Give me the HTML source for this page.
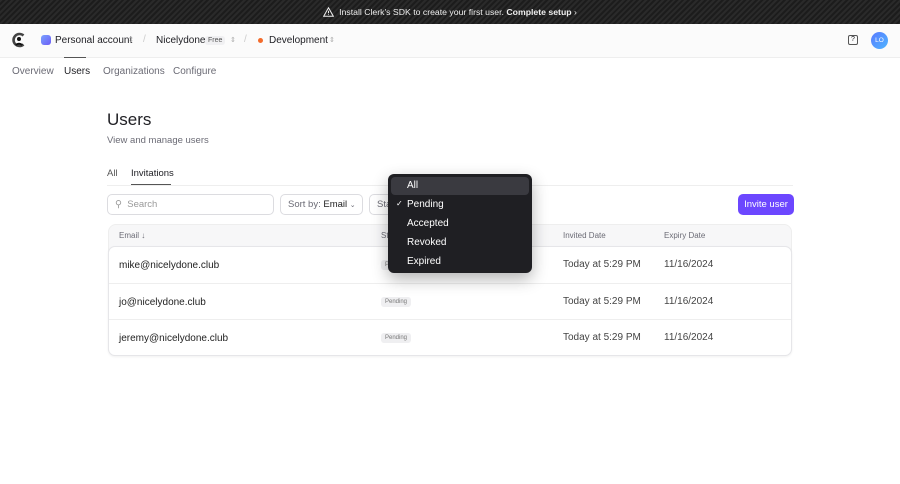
<!DOCTYPE html>
<html><head><meta charset="utf-8"><style>
*{box-sizing:border-box;margin:0;padding:0}
body{width:900px;height:484px;overflow:hidden;background:#fff;font-family:"Liberation Sans",sans-serif;color:#212126;position:relative;font-size:10px}
.a{position:absolute;white-space:nowrap}
.banner{left:0;top:0;width:900px;height:24px;background:repeating-linear-gradient(135deg,#2a2a2a 0 2px,#1c1c1c 2px 4px);color:#eee;font-size:8.7px;display:flex;align-items:center;justify-content:center;gap:5px}
.hdr{left:0;top:24px;width:900px;height:34px;background:#fbfbfb;border-bottom:1px solid #eee}
.muted{color:#6b6b75}
.btn{border:1px solid #dcdce0;border-radius:5px;background:#fff;height:21px}
.row{position:absolute;left:0;width:682px;height:36px;border-top:1px solid #eee;font-size:10px}
.row .e{position:absolute;left:10px;top:13px;color:#222}
.row .p{position:absolute;left:272px;top:13px;background:#efeff1;color:#777;font-size:6px;padding:2px 4px;border-radius:3px}
.row .i{position:absolute;left:454px;top:12px;color:#444}
.row .x{position:absolute;left:555px;top:12px;color:#444}
.menu{left:388px;top:174px;width:144px;height:99px;background:#1f1f23;border-radius:6px;box-shadow:0 6px 16px rgba(0,0,0,.3);color:#fff;font-size:10px}
.menu div{position:absolute;left:19px}
</style></head><body>
<div class="a banner"><svg width="11" height="10" viewBox="0 0 11 10"><path d="M5.5 .8L10.3 9.2H.7Z" fill="none" stroke="#eee" stroke-width="1"/><path d="M5.5 3.8v2.5M5.5 7.3v.6" stroke="#eee"/></svg><span>Install Clerk's SDK to create your first user. <b>Complete setup</b> ›</span></div>
<div class="a hdr"></div>
<svg class="a" style="left:12px;top:32px" width="14" height="16" viewBox="0 0 14 16"><path d="M11.5 3.5A6 6 0 1 0 11.5 12.5" fill="none" stroke="#444" stroke-width="2.6"/><circle cx="7" cy="7" r="2" fill="#111"/><path d="M3.8 13Q7 10.5 10.2 13" stroke="#111" stroke-width="2" fill="none"/></svg>
<div class="a" style="left:41px;top:35px;width:10px;height:10px;border-radius:3px;background:linear-gradient(135deg,#7aa2ff,#6c5cf5)"></div>
<div class="a" style="left:55px;top:35px;font-size:10px">Personal account</div>
<div class="a" style="left:128px;top:36px;font-size:7px;color:#aaa">⇕</div>
<div class="a muted" style="left:143px;top:34px;color:#ccc">/</div>
<div class="a" style="left:156px;top:35px;font-size:10px">Nicelydone</div>
<div class="a" style="left:205px;top:36px;font-size:7px;background:#f0f0f2;padding:1px 3px;border-radius:3px;color:#555">Free</div>
<div class="a" style="left:230px;top:36px;font-size:7px;color:#aaa">⇕</div>
<div class="a muted" style="left:244px;top:34px;color:#ccc">/</div>
<div class="a" style="left:258px;top:38px;width:5px;height:5px;border-radius:50%;background:#f36b2b"></div>
<div class="a" style="left:269px;top:35px;font-size:10px">Development</div>
<div class="a" style="left:329px;top:36px;font-size:7px;color:#aaa">⇕</div>
<div class="a" style="left:848px;top:35px;width:10px;height:10px;border:1px solid #555;border-radius:2px;font-size:7px;text-align:center;line-height:8px">?</div>
<div class="a" style="left:871px;top:32px;width:17px;height:17px;border-radius:50%;background:linear-gradient(135deg,#5a7bff,#4fb5ff);color:#fff;font-size:6.5px;text-align:center;line-height:17px">LO</div>
<div class="a" style="left:64px;top:57px;width:22px;height:1px;background:#555"></div>
<div class="a muted" style="left:12px;top:66px;font-size:10px">Overview</div>
<div class="a" style="left:64px;top:66px;font-size:10px">Users</div>
<div class="a muted" style="left:103px;top:66px;font-size:10px">Organizations</div>
<div class="a muted" style="left:173px;top:66px;font-size:10px">Configure</div>
<div class="a" style="left:107px;top:110px;font-size:17px">Users</div>
<div class="a muted" style="left:107px;top:135px;font-size:9.5px">View and manage users</div>
<div class="a muted" style="left:107px;top:168px;font-size:9.5px;color:#555">All</div>
<div class="a" style="left:131px;top:168px;font-size:9.5px">Invitations</div>
<div class="a" style="left:107px;top:185px;width:686px;height:1px;background:#eee"></div>
<div class="a" style="left:131px;top:184px;width:40px;height:1px;background:#555"></div>
<div class="a btn" style="left:107px;top:194px;width:167px"></div>
<div class="a muted" style="left:115px;top:199px;font-size:9.5px;color:#999">⚲&nbsp; Search</div>
<div class="a btn" style="left:280px;top:194px;width:83px"></div>
<div class="a muted" style="left:288px;top:199px;font-size:9.5px">Sort by: <span style="color:#222">Email</span> <span style="font-size:7px">⌄</span></div>
<div class="a btn" style="left:369px;top:194px;width:40px"></div>
<div class="a muted" style="left:377px;top:199px;font-size:9.5px">Sta</div>
<div class="a" style="left:738px;top:194px;width:56px;height:21px;border-radius:5px;background:#6c47ff;color:#fff;font-size:9.5px;text-align:center;line-height:21px">Invite user</div>
<div class="a" style="left:108px;top:224px;width:684px;height:132px;background:#f7f7f8;border-radius:8px;border:1px solid #eee"></div>
<div class="a muted" style="left:119px;top:231px;font-size:8px">Email ↓</div>
<div class="a muted" style="left:381px;top:231px;font-size:8px">St</div>
<div class="a muted" style="left:563px;top:231px;font-size:8px">Invited Date</div>
<div class="a muted" style="left:664px;top:231px;font-size:8px">Expiry Date</div>
<div class="a" style="left:108px;top:246px;width:684px;height:110px;background:#fff;border:1px solid #e6e6e9;border-radius:7px;box-shadow:0 1px 2px rgba(0,0,0,.06)">
<div class="row" style="top:0;border-top:none"><span class="e">mike@nicelydone.club</span><span class="p">Pending</span><span class="i">Today at 5:29 PM</span><span class="x">11/16/2024</span></div>
<div class="row" style="top:36px"><span class="e">jo@nicelydone.club</span><span class="p">Pending</span><span class="i">Today at 5:29 PM</span><span class="x">11/16/2024</span></div>
<div class="row" style="top:72px"><span class="e">jeremy@nicelydone.club</span><span class="p">Pending</span><span class="i">Today at 5:29 PM</span><span class="x">11/16/2024</span></div>
</div>
<div class="a menu">
<div style="left:3px;top:3px;width:138px;height:18px;background:#3a3a40;border-radius:4px"></div>
<div style="top:6px">All</div>
<div style="left:8px;top:25px;font-size:8px">✓</div>
<div style="top:25px">Pending</div>
<div style="top:44px">Accepted</div>
<div style="top:63px">Revoked</div>
<div style="top:82px">Expired</div>
</div>
</body></html>
